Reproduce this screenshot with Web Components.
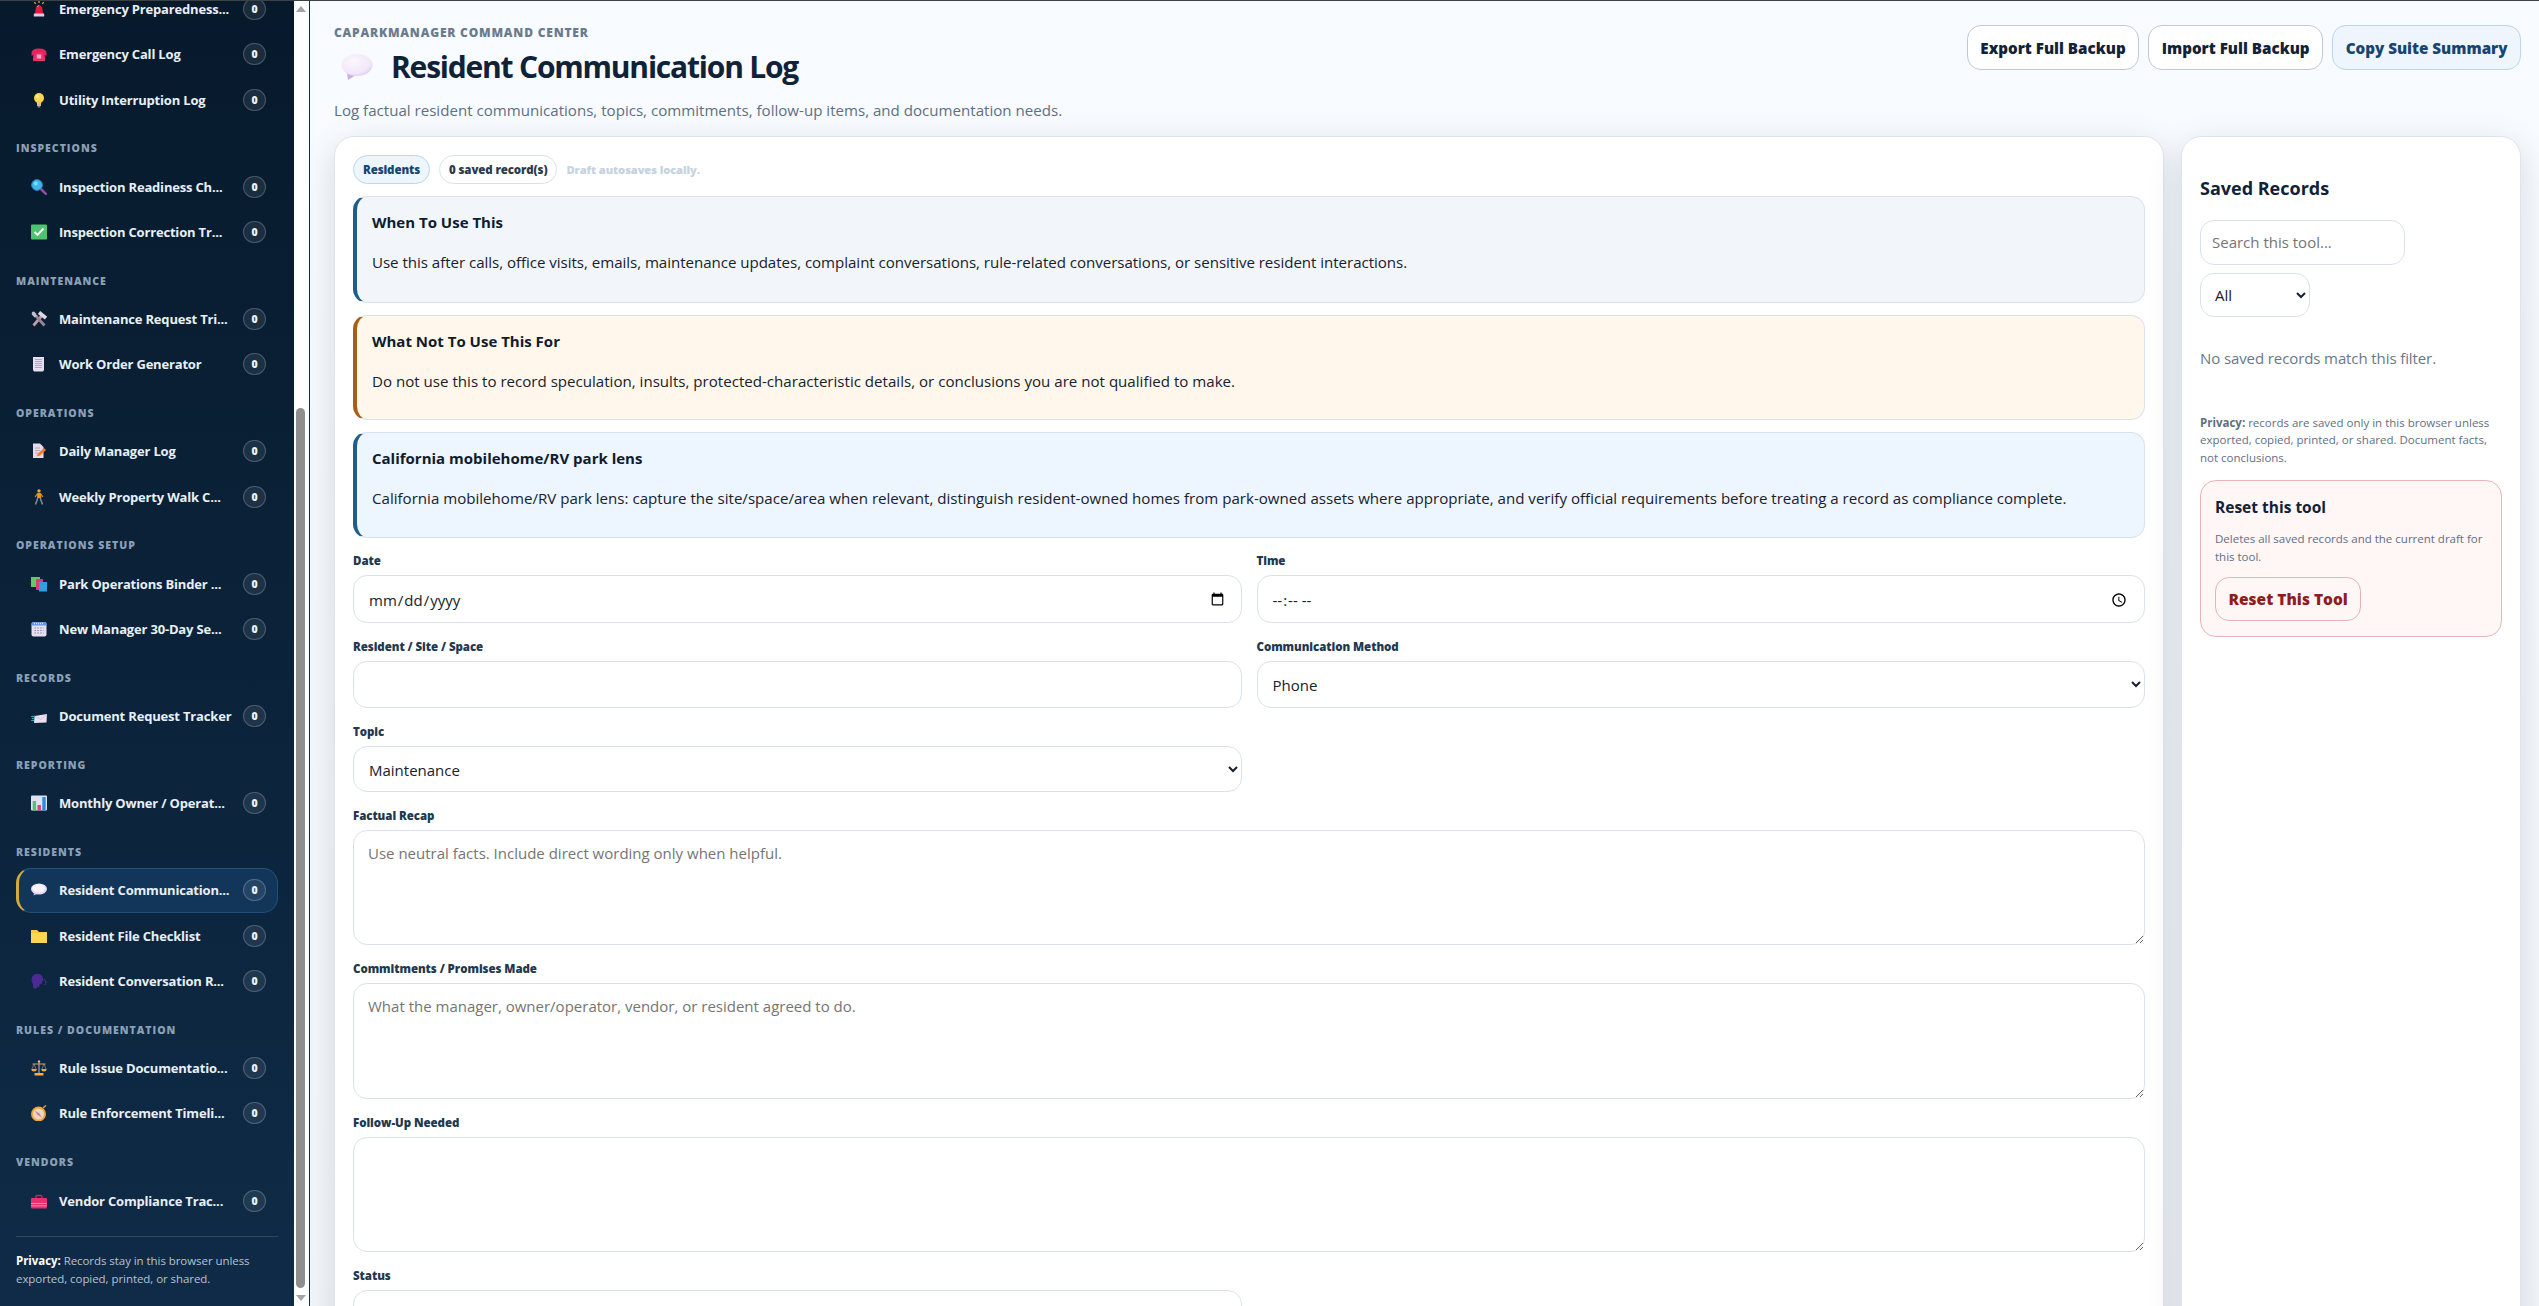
<!DOCTYPE html>
<html lang="en"><head><meta charset="utf-8"><title>Resident Communication Log</title>
<style>
html,body{margin:0;padding:0;height:100%;overflow:hidden;background:#f6f9fd}
body{font-family:"Open Sans","Noto Sans",sans-serif}
</style></head><body>
<app-shell>
  <side-nav slot="nav">
    <nav-row icon="siren" label="Emergency Preparedness..." style="margin-top:-14.65px"></nav-row>
    <nav-row icon="phone" label="Emergency Call Log"></nav-row>
    <nav-row icon="bulb" label="Utility Interruption Log"></nav-row>
    <nav-head>Inspections</nav-head>
    <nav-row icon="search" label="Inspection Readiness Ch..."></nav-row>
    <nav-row icon="check" label="Inspection Correction Tr..."></nav-row>
    <nav-head>Maintenance</nav-head>
    <nav-row icon="tools" label="Maintenance Request Tri..."></nav-row>
    <nav-row icon="receipt" label="Work Order Generator"></nav-row>
    <nav-head>Operations</nav-head>
    <nav-row icon="memo" label="Daily Manager Log"></nav-row>
    <nav-row icon="walk" label="Weekly Property Walk C..."></nav-row>
    <nav-head>Operations Setup</nav-head>
    <nav-row icon="books" label="Park Operations Binder ..."></nav-row>
    <nav-row icon="cal" label="New Manager 30-Day Se..."></nav-row>
    <nav-head>Records</nav-head>
    <nav-row icon="mail" label="Document Request Tracker"></nav-row>
    <nav-head>Reporting</nav-head>
    <nav-row icon="chart" label="Monthly Owner / Operat..."></nav-row>
    <nav-head>Residents</nav-head>
    <nav-row icon="bubble" label="Resident Communication..." active></nav-row>
    <nav-row icon="folder" label="Resident File Checklist"></nav-row>
    <nav-row icon="head" label="Resident Conversation R..."></nav-row>
    <nav-head>Rules / Documentation</nav-head>
    <nav-row icon="scales" label="Rule Issue Documentatio..."></nav-row>
    <nav-row icon="compass" label="Rule Enforcement Timeli..."></nav-row>
    <nav-head>Vendors</nav-head>
    <nav-row icon="toolbox" label="Vendor Compliance Trac..."></nav-row>
    <nav-privacy><b>Privacy:</b> Records stay in this browser unless exported, copied, printed, or shared.</nav-privacy>
  </side-nav>
  <fake-scrollbar slot="bar"></fake-scrollbar>
  <page-header>
    <action-btn>Export Full Backup</action-btn>
    <action-btn>Import Full Backup</action-btn>
    <action-btn kind="soft">Copy Suite Summary</action-btn>
  </page-header>
  <work-area>
    <panel-card>
      <chip-row></chip-row>
      <call-out title="When To Use This" tone="blue" style="height:106.7px;--ls:-.04px">Use this after calls, office visits, emails, maintenance updates, complaint conversations, rule-related conversations, or sensitive resident interactions.</call-out>
      <call-out title="What Not To Use This For" tone="amber">Do not use this to record speculation, insults, protected-characteristic details, or conclusions you are not qualified to make.</call-out>
      <call-out title="California mobilehome/RV park lens" tone="sky">California mobilehome/RV park lens: capture the site/space/area when relevant, distinguish resident-owned homes from park-owned assets where appropriate, and verify official requirements before treating a record as compliance complete.</call-out>
      <log-form></log-form>
    </panel-card>
    <records-panel></records-panel>
  </work-area>
</app-shell>
<script>
const ICONS={
siren:'<path d="M8 0v2M3.5 1l1 2M12.500 1l-1 2" stroke="#f5b942" stroke-width="1.1"/><path d="M4 13 4.800 6.500Q8 1.500 11.200 6.500L12 13Z" fill="#e8173c"/><path d="M6 6Q7 4.500 8 4.500" stroke="#ff8a9a" fill="none"/><rect x="2.800" y="12.500" width="10.400" height="3" rx=".6" fill="#e6c6ee"/>',
phone:'<path d="M.5 7Q.5 2.500 8 2.500T15.500 7V9.500H11.500V7H4.500V9.500H.5Z" fill="#e3245f"/><path d="M4.500 6.500H11.500L14 11V15H2V11Z" fill="#ec2f69"/><rect x="5.800" y="8.500" width="4.400" height="4" fill="#f9a9c1"/>',
bulb:'<circle cx="8" cy="6" r="5" fill="#ffd54f"/><path d="M5.500 9.500H10.500L10 12H6Z" fill="#ffc83a"/><circle cx="6.500" cy="4.500" r="1.600" fill="#ffeaa0"/><rect x="6" y="12" width="4" height="2" fill="#cbb8a6"/><rect x="6.700" y="14" width="2.600" height="1.500" fill="#8d7a88"/>',
search:'<path d="M9.500 9.500 14.800 14.800" stroke="#8a4f9e" stroke-width="2.600" stroke-linecap="round"/><circle cx="6" cy="6" r="5.400" fill="#3bb9ea" stroke="#3778c0" stroke-width="1"/><circle cx="4.800" cy="4.500" r="2" fill="#7fdcf5"/>',
check:'<rect x="0" y=".5" width="16" height="15" rx="1" fill="#4fc46e"/><path d="M3.500 8 6.500 11 12.500 4.500" stroke="#fff" stroke-width="1.900" fill="none"/>',
tools:'<path d="M2.500 14.500 11 4.500" stroke="#c39aa5" stroke-width="2.800"/><path d="M8 1.500 15 7" stroke="#dcd8e2" stroke-width="3.600"/><path d="M13.500 14.500 4.500 4.500" stroke="#95859a" stroke-width="2.800"/><path d="M1 2 4 4.500 5.500 3 3 .5Q.2 .5 .8 3.500L3.500 6.500 6.500 4.500" fill="#c8bfce"/>',
receipt:'<path d="M2 1H13V14L12 15.500H3L2 14Z" fill="#e6def1"/><path d="M4 3.500H11M4 5.500H11M4 7.500H11M4 9.500H11M4 11.500H11" stroke="#a69fba" stroke-width=".9"/>',
memo:'<path d="M2 .5H9L12.500 4V15H2Z" fill="#e5dbea"/><path d="M4 5H9M4 7.500H9M4 10H7" stroke="#b9a7bf" stroke-width="1"/><path d="M5.500 13.500 7 10.500 13 5 15 7 9 12.500Z" fill="#f27a2c"/>',
walk:'<circle cx="8" cy="1.900" r="1.700" fill="#f5a623"/><path d="M6.300 4H9.800L10.300 9H6Z" fill="#f0921d"/><path d="M6.500 4.500 4 8M9.500 4.500 12 8" stroke="#f0921d" stroke-width="1.100"/><path d="M6.800 9 4.500 15.500M9.200 9 11.500 15.500" stroke="#8b8b96" stroke-width="1.500"/>',
books:'<rect x="0" y="1" width="9" height="10" fill="#61c96a"/><rect x="5" y="3" width="7" height="11" fill="#d93c78"/><rect x="8" y="6" width="8" height="9.500" fill="#2f9fe3"/>',
cal:'<rect x=".5" y="1" width="15" height="14.500" rx="2" fill="#e6def1"/><path d="M.5 3A2 2 0 0 1 2.500 1H13.500A2 2 0 0 1 15.500 3V4.500H.5Z" fill="#5d97e4"/><path d="M3 2.500H13" stroke="#e6def1" stroke-width="1.600" stroke-dasharray="1 1"/><path d="M3.500 7H12.500M3.500 9.500H12.500M3.500 12H12.500" stroke="#8f8aa6" stroke-width="1.200" stroke-dasharray="1.500 1.300"/>',
mail:'<path d="M3.500 8 16 6 15.500 14.500 3 15Z" fill="#ecdff0"/><path d="M3.500 8 10 11.500 16 6" stroke="#c9b8d4" fill="none" stroke-width=".7"/><path d="M.2 8.500H3M.8 10.500H3M.2 12.500H3" stroke="#39c1d6" stroke-width=".9"/>',
chart:'<rect x="0" y=".5" width="16" height="15" rx="1" fill="#dfe2f0"/><rect x="1.700" y="6" width="3.400" height="9.500" fill="#4fc46e"/><rect x="6.500" y="10" width="3.400" height="5.500" fill="#e23f79"/><rect x="11.300" y="2" width="3.400" height="13.500" fill="#2f89de"/>',
bubble:'<path d="M3 11 2.500 13.500 6 12Z" fill="#c9b4e3"/><ellipse cx="8" cy="7" rx="8" ry="5.500" fill="#e6d9f2"/><ellipse cx="7.600" cy="6.300" rx="6.400" ry="4.100" fill="#f8f2fc"/>',
folder:'<path d="M0 5V2H6L8 4H16V15H0Z" fill="#ffc93e"/><path d="M0 5H16V15H0Z" fill="#ffd557"/>',
head:'<path d="M.5 7A6 6 0 0 1 11.500 3.500L12.500 7.500 11 8.500V10.500L8.500 11.500V13L4.500 16 2 14.500V11Q.5 9 .5 7Z" fill="#4b2a92"/><path d="M13.500 6.500 14.500 7M14 9H15.500M13.500 11.500 14.500 11" stroke="#6a44b5" stroke-width="1"/>',
scales:'<path d="M8 1V13" stroke="#a892a0" stroke-width="1.300"/><path d="M1.500 4H14.500" stroke="#c8a27a" stroke-width="1"/><path d="M.2 9H6Q5.500 11.500 3 11.500T.2 9ZM10 9H15.800Q15.500 11.500 13 11.500T10 9Z" fill="#f3a534"/><path d="M3 4 1 9M3 4 5 9M13 4 11 9M13 4 15 9" stroke="#b8a08a" stroke-width=".6"/><rect x="3.500" y="13" width="9" height="2.500" rx=".6" fill="#f3b03e"/><circle cx="8" cy="1.500" r="1.200" fill="#d9b68a"/>',
compass:'<circle cx="7.500" cy="9" r="6.500" fill="#ecd7c0" stroke="#f2a33a" stroke-width="2"/><path d="M3.500 5.500 8.500 8.500 11 12.500 6.500 10Z" fill="#c0889a"/><path d="M12 3 15 .5" stroke="#d59a3e" stroke-width="1.600"/>',
toolbox:'<path d="M5 6V3.500Q5 2.500 6 2.500H10Q11 2.500 11 3.500V6" stroke="#c7285f" stroke-width="1.400" fill="none"/><rect x="0" y="5" width="16" height="10.500" rx="1" fill="#ec2f6e"/><path d="M0 10.500H16M0 12.800H16" stroke="#f7a0bd" stroke-width=".8"/>'
};
const mk=(name,html)=>{customElements.define(name,class extends HTMLElement{
  connectedCallback(){if(this.shadowRoot)return;const s=this.attachShadow({mode:'open'});s.innerHTML=typeof html==='function'?html(this):html;}
});};
const SANS='"Open Sans","Noto Sans",sans-serif';
mk('app-icon',h=>`<style>:host{display:inline-flex;width:16px;height:16px;flex:none}svg{width:100%;height:100%;display:block}</style><svg viewBox="0 0 16 16" aria-hidden="true">${ICONS[h.getAttribute('name')]||''}</svg>`);
mk('app-shell',`<style>
:host{display:grid;grid-template-columns:294px 16px 1fr;grid-template-rows:1px 1305px;height:1306px;overflow:hidden;background:linear-gradient(180deg,#f8fbff 0,#f3f6fa 100%)}
.top{grid-column:1/-1;background:#3c4144}
main{min-width:0;overflow:hidden;padding:24px 18px 0 24px;box-sizing:border-box}
</style><div class="top"></div><slot name="nav"></slot><slot name="bar"></slot><main><slot></slot></main>`);
mk('side-nav',`<style>
:host{display:block;overflow:hidden;padding:0 16px;box-sizing:border-box;background:linear-gradient(180deg,#071a2c 0,#0f2b47 100%);font-family:${SANS}}
</style><slot></slot>`);
mk('nav-row',h=>`<style>
:host{display:flex;align-items:center;height:45.3px;box-sizing:border-box;border:1px solid transparent;border-left:3px solid transparent;border-radius:15px;padding:0 11px 0 12px;gap:12px;color:#e8eff6}
:host([active]){background:#12365a;border-color:#22507a;border-left-color:#d6a93c}
.t{flex:1;min-width:0;font-size:13px;font-weight:700;white-space:nowrap;letter-spacing:-.014em}
.b{width:23px;height:22px;flex:none;box-sizing:border-box;border:1px solid rgba(255,255,255,.2);border-radius:11px;background:rgba(255,255,255,.08);display:flex;align-items:center;justify-content:center;font-size:10.500px;font-weight:800;color:#eef3f8}
</style><app-icon name="${h.getAttribute('icon')}"></app-icon><span class="t">${h.getAttribute('label')}</span><span class="b">0</span>`);
mk('nav-head',`<style>
:host{display:block;margin:19px 0 7.800px;height:15px;line-height:15px;font-size:10.500px;font-weight:800;letter-spacing:.095em;text-transform:uppercase;color:#8aa0b6}
</style><slot></slot>`);
mk('nav-privacy',`<style>
:host{display:block;margin-top:13px;border-top:1px solid rgba(255,255,255,.14);padding-top:15px;font-size:11.500px;line-height:18px;color:#b5c3d2;letter-spacing:-.06px}
::slotted(b){color:#fff}
</style><slot></slot>`);
mk('fake-scrollbar',`<style>
:host{display:flex;flex-direction:column;align-items:center;box-sizing:border-box;background:#fff;border-right:1px solid #1a2a3c;padding-right:2px;height:1305px}
.u,.d{width:0;height:0;border-left:5px solid transparent;border-right:5px solid transparent}
.u{border-bottom:6px solid #a3a3a3;margin-top:5px}
.d{border-top:6px solid #a3a3a3}
.t{width:9.500px;height:880px;background:#8e8e8e;border-radius:5px;margin:396px 0 7px}
</style><div class="u"></div><div class="t"></div><div class="d"></div>`);
mk('page-header',`<style>
:host{display:flex;justify-content:space-between;align-items:flex-start;height:95px;margin-bottom:16px;font-family:${SANS}}
.e{font-size:12px;line-height:16px;font-weight:800;letter-spacing:.8px;color:#6b7a8c;text-transform:uppercase}
h1{display:flex;align-items:center;gap:18px;margin:6px 0 13px;height:40px;font-size:30px;line-height:40px;font-weight:700;letter-spacing:-.04em;color:#0f2238}
p{margin:0;font-size:15.100px;line-height:20px;color:#5e6f84}
.a{display:flex;gap:9px}
</style><div><div class="e">CAPARKMANAGER COMMAND CENTER</div><h1><svg width="32" height="30" viewBox="0 0 32 30" style="margin-left:7px" aria-hidden="true"><defs><radialGradient id="g" cx=".4" cy=".35" r=".75"><stop offset="0" stop-color="#fbf7fe"/><stop offset=".7" stop-color="#f1e7f9"/><stop offset="1" stop-color="#d9c7ee"/></radialGradient></defs><path d="M6 21 7 28 15 23Z" fill="#c7b2e2"/><ellipse cx="16" cy="13" rx="15.500" ry="11" fill="url(#g)"/></svg>Resident Communication Log</h1><p>Log factual resident communications, topics, commitments, follow-up items, and documentation needs.</p></div><div class="a"><slot></slot></div>`);
mk('action-btn',`<style>
:host{display:inline-flex;align-items:center;height:45px;box-sizing:border-box;padding:0 12.500px;border:1px solid #c1c9d6;border-radius:14px;background:#fff;color:#0f2238;font-size:15.200px;font-weight:800;white-space:nowrap}
:host([kind=soft]){background:#eef5fd;border-color:#bcd4ee;color:#17456f}
</style><slot></slot>`);
mk('work-area',`<style>:host{display:grid;grid-template-columns:1fr 340px;gap:17px;align-items:stretch;height:1400px;font-family:${SANS}}</style><slot></slot>`);
mk('panel-card',`<style>
:host{display:block;min-width:0;box-sizing:border-box;background:#fff;border:1px solid #dde4ec;border-radius:20px;padding:18px;box-shadow:0 10px 34px rgba(15,35,60,.14)}
</style><slot></slot>`);
mk('chip-row',`<style>
:host{display:flex;align-items:center;gap:9px;height:29px;margin-bottom:12px;font-size:11.500px;font-weight:800;letter-spacing:-.01em}
span{display:inline-flex;align-items:center;height:29px;box-sizing:border-box;padding:0 9px;border-radius:15px;border:1px solid #d9e2ec;color:#2b3a4d}
.a{background:#eef6fd;border-color:#bcd6ec;color:#17456f}
i{font-style:normal;color:#c6d2de;font-size:11.200px}
</style><span class="a">Residents</span><span>0 saved record(s)</span><i>Draft autosaves locally.</i>`);
mk('call-out',h=>`<style>
:host{display:block;box-sizing:border-box;height:105.500px;margin-bottom:12px;padding:15px 14px 0 15px;border:1px solid #d9e2ec;border-left:4px solid #1d5f8a;border-radius:14px;background:#f2f6fb;color:#17212b}
:host([tone=amber]){background:#fff7ec;border-left-color:#a85f14}
:host([tone=sky]){background:#edf5ff}
h3{margin:0 0 20px;font-size:15px;line-height:20px;font-weight:700;color:#0f1c2c}
p{margin:0;font-size:15.100px;line-height:20px;letter-spacing:var(--ls,0)}
</style><h3>${h.getAttribute('title')}</h3><p><slot></slot></p>`);
mk('log-form',`<style>
:host{display:grid;grid-template-columns:1fr 1fr;column-gap:15px;row-gap:16px;margin-top:15px}
.f{display:block;min-width:0}
.w{grid-column:1/-1}
label{display:block;height:16px;line-height:16px;margin-bottom:6px;font-size:11.500px;font-weight:800;color:#22384f;letter-spacing:-.005em}
input,select,textarea{display:block;width:100%;box-sizing:border-box;border:1px solid #d9e2ec;border-radius:14px;background:#fff;font:15px ${SANS};color:#17212b;padding:2px 14px 0;outline:0}
select{padding:2px 11px 0}
textarea{height:115.500px;padding:12px 14px;resize:vertical}
</style>
<div class="f"><label>Date</label><input type="date" style="height:48px"></div>
<div class="f"><label>Time</label><input type="time" style="height:48px"></div>
<div class="f"><label>Resident / Site / Space</label><input type="text" style="height:47px"></div>
<div class="f"><label>Communication Method</label><select style="height:47px"><option>Phone</option></select></div>
<div class="f"><label>Topic</label><select style="height:46px"><option>Maintenance</option></select></div><div></div>
<div class="f w"><label>Factual Recap</label><textarea placeholder="Use neutral facts. Include direct wording only when helpful."></textarea></div>
<div class="f w"><label>Commitments / Promises Made</label><textarea placeholder="What the manager, owner/operator, vendor, or resident agreed to do."></textarea></div>
<div class="f w"><label>Follow-Up Needed</label><textarea></textarea></div>
<div class="f"><label>Status</label><select style="height:46px"><option></option></select></div>`);
mk('records-panel',`<style>
:host{display:block;box-sizing:border-box;background:#fff;border:1px solid #dde4ec;border-radius:20px;padding:39px 18px 0;box-shadow:0 10px 34px rgba(15,35,60,.14);color:#0f2238}
h2{margin:0 0 20px;font-size:18px;line-height:24px;font-weight:700}
input,select{display:block;box-sizing:border-box;border:1px solid #d9e2ec;border-radius:14px;background:#fff;font:15px ${SANS};color:#17212b;outline:0}
input{width:204.500px;height:44.700px;padding:0 11px;margin-bottom:8px}
select{width:110px;height:44px;padding:0 10px}
.n{margin:31px 0 46px;font-size:15px;line-height:20px;color:#6b7788;letter-spacing:-.1px}
.p{margin:0 0 13.500px;font-size:11.500px;line-height:17.500px;color:#5f6f82}
.r{box-sizing:border-box;height:157px;padding:16px 14px 0;border:1px solid #e8b6b6;border-radius:16px;background:#fff6f6}
h3{margin:0 0 13px;font-size:15.500px;line-height:20px;font-weight:700}
.d{margin:0 0 11px;font-size:11.500px;line-height:18px;color:#5f6f82}
.b{display:inline-flex;align-items:center;height:44.500px;box-sizing:border-box;padding:0 12.500px;border:1px solid #e6b4b4;border-radius:14px;color:#8f1d1d;font-size:15.500px;font-weight:800}
</style><h2>Saved Records</h2><input placeholder="Search this tool..."><select><option>All</option></select>
<p class="n">No saved records match this filter.</p>
<p class="p"><b>Privacy:</b> records are saved only in this browser unless exported, copied, printed, or shared. Document facts, not conclusions.</p>
<div class="r"><h3>Reset this tool</h3><p class="d">Deletes all saved records and the current draft for this tool.</p><span class="b">Reset This Tool</span></div>`);
</script>
</body></html>
